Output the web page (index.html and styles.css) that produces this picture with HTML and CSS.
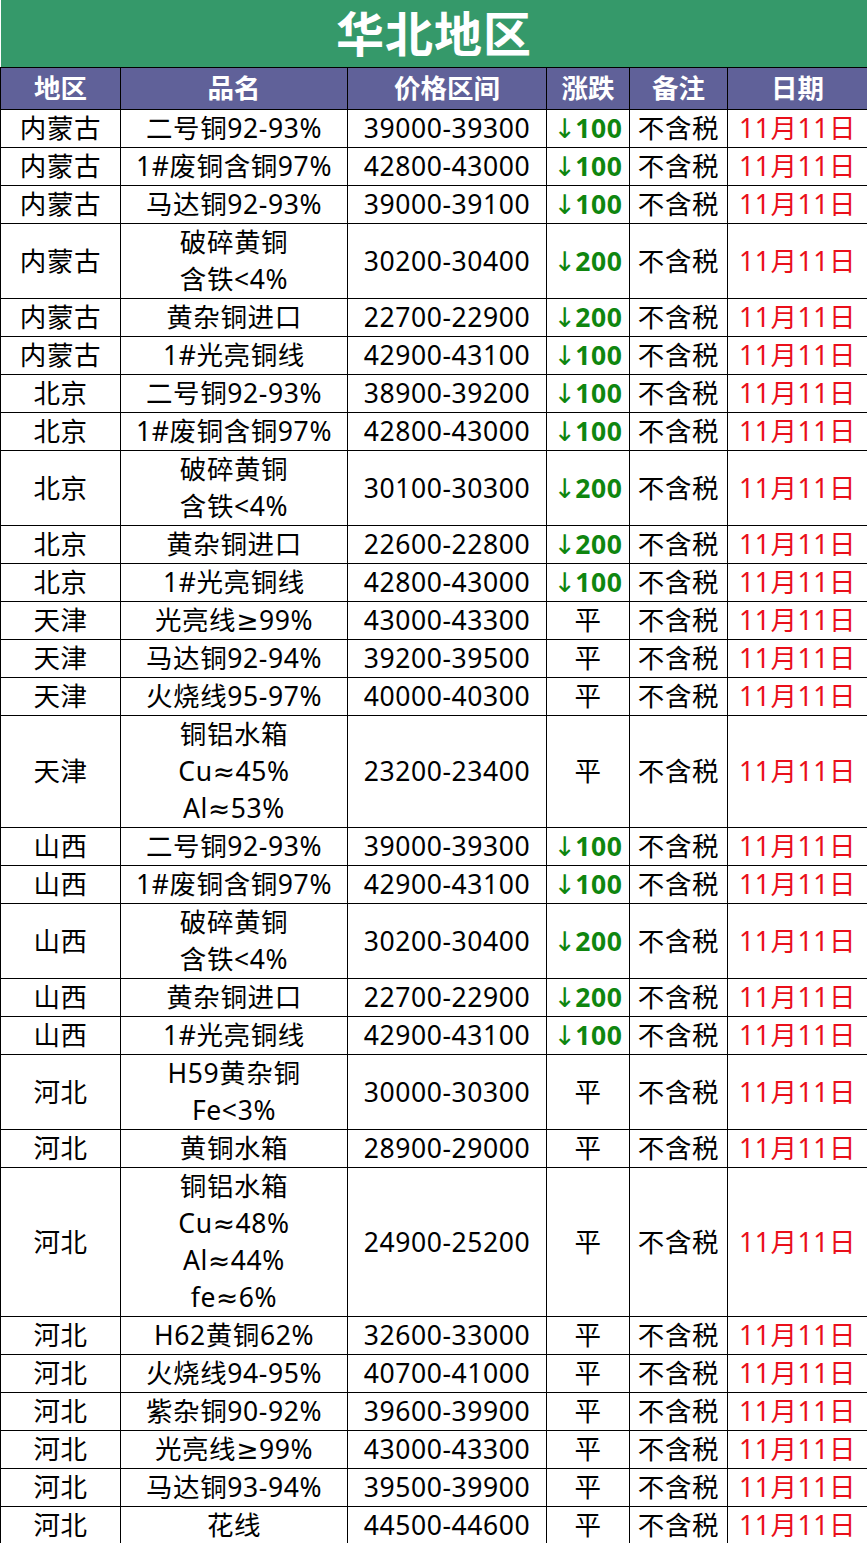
FILE: index.html
```html
<!DOCTYPE html>
<html lang="zh-CN">
<head>
<meta charset="utf-8">
<title>华北地区</title>
<link rel="stylesheet" href="styles.css">
</head>
<body>
<table class="price-table">
  <colgroup>
    <col class="c-region"><col class="c-name"><col class="c-price"><col class="c-chg"><col class="c-note"><col class="c-date">
  </colgroup>
  <thead>
    <tr class="title-row"><th colspan="6">华北地区</th></tr>
    <tr class="head-row"><th>地区</th><th>品名</th><th>价格区间</th><th>涨跌</th><th>备注</th><th>日期</th></tr>
  </thead>
  <tbody>
    <tr><td>内蒙古</td><td>二号铜92-93%</td><td>39000-39300</td><td class="down"><span class="arr">↓</span>100</td><td>不含税</td><td class="date">11月11日</td></tr>
    <tr><td>内蒙古</td><td>1#废铜含铜97%</td><td>42800-43000</td><td class="down"><span class="arr">↓</span>100</td><td>不含税</td><td class="date">11月11日</td></tr>
    <tr><td>内蒙古</td><td>马达铜92-93%</td><td>39000-39100</td><td class="down"><span class="arr">↓</span>100</td><td>不含税</td><td class="date">11月11日</td></tr>
    <tr><td>内蒙古</td><td>破碎黄铜<br>含铁&lt;4%</td><td>30200-30400</td><td class="down"><span class="arr">↓</span>200</td><td>不含税</td><td class="date">11月11日</td></tr>
    <tr><td>内蒙古</td><td>黄杂铜进口</td><td>22700-22900</td><td class="down"><span class="arr">↓</span>200</td><td>不含税</td><td class="date">11月11日</td></tr>
    <tr><td>内蒙古</td><td>1#光亮铜线</td><td>42900-43100</td><td class="down"><span class="arr">↓</span>100</td><td>不含税</td><td class="date">11月11日</td></tr>
    <tr><td>北京</td><td>二号铜92-93%</td><td>38900-39200</td><td class="down"><span class="arr">↓</span>100</td><td>不含税</td><td class="date">11月11日</td></tr>
    <tr><td>北京</td><td>1#废铜含铜97%</td><td>42800-43000</td><td class="down"><span class="arr">↓</span>100</td><td>不含税</td><td class="date">11月11日</td></tr>
    <tr><td>北京</td><td>破碎黄铜<br>含铁&lt;4%</td><td>30100-30300</td><td class="down"><span class="arr">↓</span>200</td><td>不含税</td><td class="date">11月11日</td></tr>
    <tr><td>北京</td><td>黄杂铜进口</td><td>22600-22800</td><td class="down"><span class="arr">↓</span>200</td><td>不含税</td><td class="date">11月11日</td></tr>
    <tr><td>北京</td><td>1#光亮铜线</td><td>42800-43000</td><td class="down"><span class="arr">↓</span>100</td><td>不含税</td><td class="date">11月11日</td></tr>
    <tr><td>天津</td><td>光亮线≥99%</td><td>43000-43300</td><td>平</td><td>不含税</td><td class="date">11月11日</td></tr>
    <tr><td>天津</td><td>马达铜92-94%</td><td>39200-39500</td><td>平</td><td>不含税</td><td class="date">11月11日</td></tr>
    <tr><td>天津</td><td>火烧线95-97%</td><td>40000-40300</td><td>平</td><td>不含税</td><td class="date">11月11日</td></tr>
    <tr><td>天津</td><td>铜铝水箱<br>Cu≈45%<br>Al≈53%</td><td>23200-23400</td><td>平</td><td>不含税</td><td class="date">11月11日</td></tr>
    <tr><td>山西</td><td>二号铜92-93%</td><td>39000-39300</td><td class="down"><span class="arr">↓</span>100</td><td>不含税</td><td class="date">11月11日</td></tr>
    <tr><td>山西</td><td>1#废铜含铜97%</td><td>42900-43100</td><td class="down"><span class="arr">↓</span>100</td><td>不含税</td><td class="date">11月11日</td></tr>
    <tr><td>山西</td><td>破碎黄铜<br>含铁&lt;4%</td><td>30200-30400</td><td class="down"><span class="arr">↓</span>200</td><td>不含税</td><td class="date">11月11日</td></tr>
    <tr><td>山西</td><td>黄杂铜进口</td><td>22700-22900</td><td class="down"><span class="arr">↓</span>200</td><td>不含税</td><td class="date">11月11日</td></tr>
    <tr><td>山西</td><td>1#光亮铜线</td><td>42900-43100</td><td class="down"><span class="arr">↓</span>100</td><td>不含税</td><td class="date">11月11日</td></tr>
    <tr><td>河北</td><td>H59黄杂铜<br>Fe&lt;3%</td><td>30000-30300</td><td>平</td><td>不含税</td><td class="date">11月11日</td></tr>
    <tr><td>河北</td><td>黄铜水箱</td><td>28900-29000</td><td>平</td><td>不含税</td><td class="date">11月11日</td></tr>
    <tr><td>河北</td><td>铜铝水箱<br>Cu≈48%<br>Al≈44%<br>fe≈6%</td><td>24900-25200</td><td>平</td><td>不含税</td><td class="date">11月11日</td></tr>
    <tr><td>河北</td><td>H62黄铜62%</td><td>32600-33000</td><td>平</td><td>不含税</td><td class="date">11月11日</td></tr>
    <tr><td>河北</td><td>火烧线94-95%</td><td>40700-41000</td><td>平</td><td>不含税</td><td class="date">11月11日</td></tr>
    <tr><td>河北</td><td>紫杂铜90-92%</td><td>39600-39900</td><td>平</td><td>不含税</td><td class="date">11月11日</td></tr>
    <tr><td>河北</td><td>光亮线≥99%</td><td>43000-43300</td><td>平</td><td>不含税</td><td class="date">11月11日</td></tr>
    <tr><td>河北</td><td>马达铜93-94%</td><td>39500-39900</td><td>平</td><td>不含税</td><td class="date">11月11日</td></tr>
    <tr><td>河北</td><td>花线</td><td>44500-44600</td><td>平</td><td>不含税</td><td class="date">11月11日</td></tr>
  </tbody>
</table>
</body>
</html>
```

FILE: styles.css
```css
html, body {
  margin: 0;
  padding: 0;
  background: #ffffff;
}

.price-table {
  width: 867px;
  border-collapse: collapse;
  table-layout: fixed;
  font-family: "Noto Sans", "DejaVu Sans", "Noto Sans CJK SC", sans-serif;
  font-size: 26.5px;
  color: #000;
}

.c-region { width: 120px; }
.c-name { width: 227px; }
.c-price { width: 199px; }
.c-chg { width: 83px; }
.c-note { width: 98px; }
.c-date { width: 140px; }

.price-table td,
.price-table th {
  border: 1px solid #000;
  padding: 0;
  text-align: center;
  vertical-align: middle;
  white-space: nowrap;
  overflow: hidden;
}

.price-table td {
  line-height: 37px;
  letter-spacing: 0.6px;
}

.title-row th {
  background: #35996a;
  color: #fff;
  font-size: 48px;
  font-weight: 700;
  height: 67px;
  line-height: 67px;
  border: none;
  border-bottom: 1px solid #000;
  letter-spacing: 1px;
}

.head-row th {
  background: #606199;
  color: #fff;
  font-weight: 700;
  font-size: 26.5px;
  height: 41px;
  line-height: 41px;
}

.down {
  color: #0f860f;
  font-weight: 700;
}

.down .arr {
  font-family: "DejaVu Sans", sans-serif;
  font-weight: 400;
  font-size: 27px;
  letter-spacing: -1px;
}

.date {
  color: #ea0f1a;
}
```
